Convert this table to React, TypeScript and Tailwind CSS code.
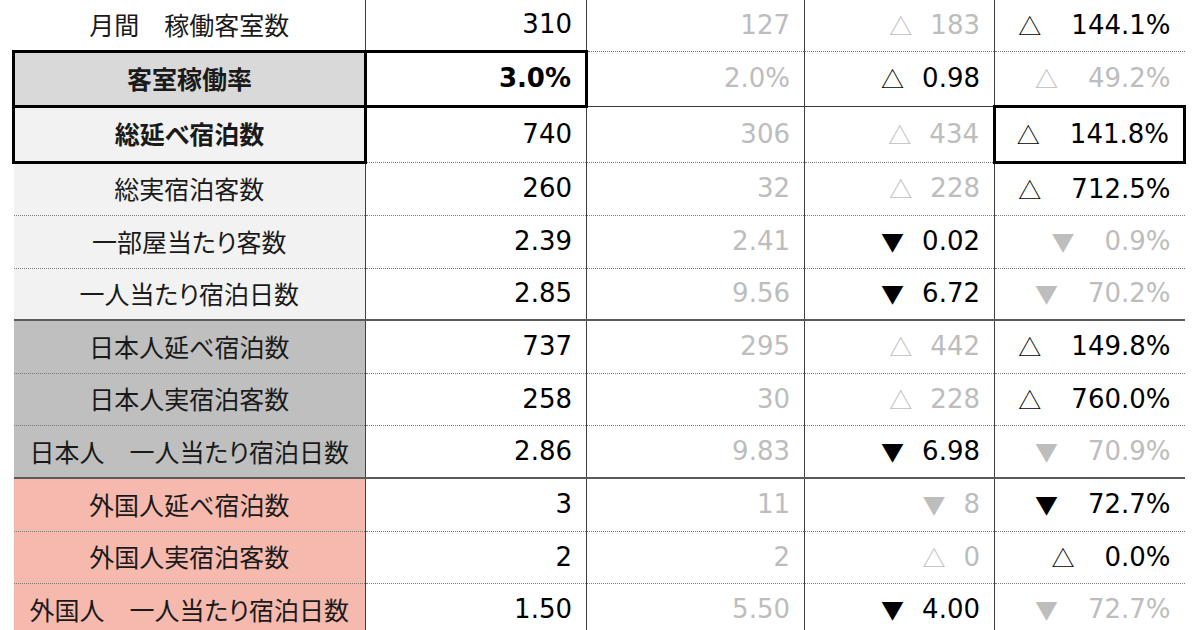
import React from "react";

type Tri = "up" | "down";
type Delta = { t: Tri; n: string; g: boolean; box?: boolean };
type Row = {
  label: string;
  bg: string;
  bold?: boolean;
  labelBox?: boolean;
  v1: string;
  v1Bold?: boolean;
  v1Box?: boolean;
  v2: string;
  d: Delta;
  p: Delta;
  line: "dotted" | "thin" | "solid" | "none";
  h: string;
};

const rows: Row[] = [
  { label: "月間　稼働客室数", bg: "bg-white", v1: "310", v2: "127", d: { t: "up", n: "183", g: true }, p: { t: "up", n: "144.1%", g: false }, line: "dotted", h: "h-[51px]" },
  { label: "客室稼働率", bg: "bg-[#d9d9d9]", bold: true, labelBox: true, v1: "3.0%", v1Bold: true, v1Box: true, v2: "2.0%", d: { t: "up", n: "0.98", g: false }, p: { t: "up", n: "49.2%", g: true }, line: "thin", h: "h-[55px]" },
  { label: "総延べ宿泊数", bg: "bg-[#f2f2f2]", bold: true, labelBox: true, v1: "740", v2: "306", d: { t: "up", n: "434", g: true }, p: { t: "up", n: "141.8%", g: false, box: true }, line: "dotted", h: "h-[56px]" },
  { label: "総実宿泊客数", bg: "bg-[#f2f2f2]", v1: "260", v2: "32", d: { t: "up", n: "228", g: true }, p: { t: "up", n: "712.5%", g: false }, line: "dotted", h: "h-[53px]" },
  { label: "一部屋当たり客数", bg: "bg-[#f2f2f2]", v1: "2.39", v2: "2.41", d: { t: "down", n: "0.02", g: false }, p: { t: "down", n: "0.9%", g: true }, line: "dotted", h: "h-[53px]" },
  { label: "一人当たり宿泊日数", bg: "bg-[#f2f2f2]", v1: "2.85", v2: "9.56", d: { t: "down", n: "6.72", g: false }, p: { t: "down", n: "70.2%", g: true }, line: "solid", h: "h-[52px]" },
  { label: "日本人延べ宿泊数", bg: "bg-[#bfbfbf]", v1: "737", v2: "295", d: { t: "up", n: "442", g: true }, p: { t: "up", n: "149.8%", g: false }, line: "dotted", h: "h-[53px]" },
  { label: "日本人実宿泊客数", bg: "bg-[#bfbfbf]", v1: "258", v2: "30", d: { t: "up", n: "228", g: true }, p: { t: "up", n: "760.0%", g: false }, line: "dotted", h: "h-[52px]" },
  { label: "日本人　一人当たり宿泊日数", bg: "bg-[#bfbfbf]", v1: "2.86", v2: "9.83", d: { t: "down", n: "6.98", g: false }, p: { t: "down", n: "70.9%", g: true }, line: "solid", h: "h-[53px]" },
  { label: "外国人延べ宿泊数", bg: "bg-[#f5b9ae]", v1: "3", v2: "11", d: { t: "down", n: "8", g: true }, p: { t: "down", n: "72.7%", g: false }, line: "dotted", h: "h-[53px]" },
  { label: "外国人実宿泊客数", bg: "bg-[#f5b9ae]", v1: "2", v2: "2", d: { t: "up", n: "0", g: true }, p: { t: "up", n: "0.0%", g: false }, line: "dotted", h: "h-[52px]" },
  { label: "外国人　一人当たり宿泊日数", bg: "bg-[#f5b9ae]", v1: "1.50", v2: "5.50", d: { t: "down", n: "4.00", g: false }, p: { t: "down", n: "72.7%", g: true }, line: "none", h: "h-[52px]" },
];

const lineCls: Record<Row["line"], string> = {
  dotted: "border-b border-b-[#7a7a7a] [border-bottom-style:dotted]",
  thin: "border-b border-b-[#3a3a3a]",
  solid: "border-b-2 border-b-[#5a5a5a]",
  none: "",
};

const BOX = "border-[3px] border-black";
const VL = "border-l border-l-[#404040]";

const numFont = "font-['DejaVu_Sans','Liberation_Sans',sans-serif]";
const cjkFont = "font-['Noto_Sans_CJK_JP','Noto_Sans',sans-serif]";

function TriGlyph({ t, gray }: { t: Tri; gray: boolean }) {
  return (
    <span className={`${cjkFont} text-[23px] leading-none ${gray ? "text-[#bdbdbd]" : "text-black"}`}>
      {t === "up" ? "△" : "▼"}
    </span>
  );
}

function DeltaCell({ d, gap }: { d: Delta; gap: string }) {
  return (
    <div className="flex items-center justify-end">
      <TriGlyph t={d.t} gray={d.g} />
      <span className={`${gap} ${d.g ? "text-[#bdbdbd]" : "text-black"}`}>{d.n}</span>
    </div>
  );
}

export default function App() {
  return (
    <div className="w-[1200px] h-[630px] overflow-hidden bg-white">
      <table className={`ml-[12px] border-collapse table-fixed w-[1171px] ${numFont} text-[26px] text-black`}>
        <colgroup>
          <col className="w-[352px]" />
          <col className="w-[221px]" />
          <col className="w-[218px]" />
          <col className="w-[190px]" />
          <col className="w-[190px]" />
        </colgroup>
        <tbody>
          {rows.map((r, i) => {
            const lc = lineCls[r.line];
            return (
              <tr key={i} className={r.h}>
                <td
                  className={`${r.bg} ${r.labelBox ? BOX : lc} p-0 text-center ${cjkFont} text-[25px] [font-feature-settings:'palt'] ${r.bold ? "font-bold" : "font-normal"} text-[#1a1a1a]`}
                >
                  {r.label}
                </td>
                <td className={`${r.v1Box ? BOX : `${lc} ${VL}`} p-0 pr-[14px] text-right ${r.v1Bold ? "font-bold" : ""}`}>
                  {r.v1}
                </td>
                <td className={`${lc} ${VL} p-0 pr-[14px] text-right text-[#bdbdbd]`}>{r.v2}</td>
                <td className={`${lc} ${VL} p-0 pr-[14px]`}>
                  <DeltaCell d={r.d} gap="ml-[18px]" />
                </td>
                <td className={`${r.p.box ? BOX : `${lc} ${VL}`} p-0 pr-[14px]`}>
                  <DeltaCell d={r.p} gap="ml-[30px]" />
                </td>
              </tr>
            );
          })}
        </tbody>
      </table>
    </div>
  );
}
